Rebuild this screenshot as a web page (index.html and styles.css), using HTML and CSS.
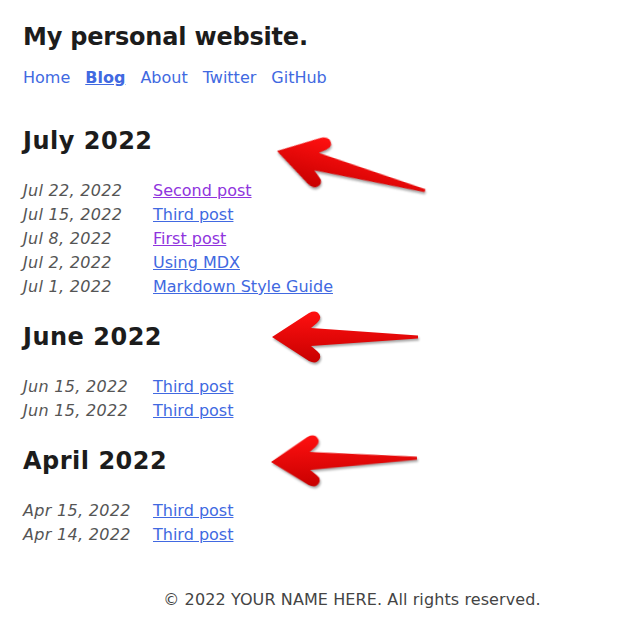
FILE: index.html
```html
<!DOCTYPE html>
<html lang="en">
<head>
<meta charset="utf-8">
<title>My personal website.</title>
<link rel="stylesheet" href="styles.css">
</head>
<body>
<div class="page">
  <header class="site-header">
    <h1 class="site-title">My personal website.</h1>
    <nav class="nav">
      <a class="nav-link" href="#">Home</a>
      <a class="nav-link active" href="#">Blog</a>
      <a class="nav-link" href="#">About</a>
      <a class="nav-link" href="#">Twitter</a>
      <a class="nav-link" href="#">GitHub</a>
    </nav>
  </header>
  <main class="archive">
    <section class="month">
      <h2 class="month-title">July 2022</h2>
      <ul class="posts">
        <li class="post"><span class="date">Jul 22, 2022</span><a class="post-link visited" href="#">Second post</a></li>
        <li class="post"><span class="date">Jul 15, 2022</span><a class="post-link" href="#">Third post</a></li>
        <li class="post"><span class="date">Jul 8, 2022</span><a class="post-link visited" href="#">First post</a></li>
        <li class="post"><span class="date">Jul 2, 2022</span><a class="post-link" href="#">Using MDX</a></li>
        <li class="post"><span class="date">Jul 1, 2022</span><a class="post-link" href="#">Markdown Style Guide</a></li>
      </ul>
    </section>
    <section class="month">
      <h2 class="month-title">June 2022</h2>
      <ul class="posts">
        <li class="post"><span class="date">Jun 15, 2022</span><a class="post-link" href="#">Third post</a></li>
        <li class="post"><span class="date">Jun 15, 2022</span><a class="post-link" href="#">Third post</a></li>
      </ul>
    </section>
    <section class="month">
      <h2 class="month-title">April 2022</h2>
      <ul class="posts">
        <li class="post"><span class="date">Apr 15, 2022</span><a class="post-link" href="#">Third post</a></li>
        <li class="post"><span class="date">Apr 14, 2022</span><a class="post-link" href="#">Third post</a></li>
      </ul>
    </section>
  </main>
  <footer class="site-footer">© 2022 YOUR NAME HERE. All rights reserved.</footer>

  <svg class="annotations" width="622" height="630" viewBox="0 0 622 630" aria-hidden="true">
    <defs>
      <linearGradient id="red" x1="0" y1="0" x2="0" y2="1">
        <stop offset="0" stop-color="#ff1010"/>
        <stop offset="1" stop-color="#c80000"/>
      </linearGradient>
      <path id="arrow" d="M0,0 L37,-24 Q45,-28 48,-21 Q49,-17 45,-14 L39,-9 L146,-1.5 L146,1.5 L39,9 L45,14 Q49,17 48,21 Q45,28 37,24 Z"/>
    </defs>
    <g class="arrow" transform="translate(277,151) rotate(15) scale(1.05,1)"><use href="#arrow" fill="url(#red)"/></g>
    <g class="arrow" transform="translate(272,337)"><use href="#arrow" fill="url(#red)"/></g>
    <g class="arrow" transform="translate(271,462) rotate(-1.5)"><use href="#arrow" fill="url(#red)"/></g>
  </svg>
</div>
</body>
</html>
```

FILE: styles.css
```css
html, body {
  margin: 0;
  padding: 0;
  background: #ffffff;
}

body {
  font-family: "DejaVu Sans", Verdana, sans-serif;
  font-size: 16px;
  line-height: 24px;
  color: #222222;
}

.page {
  position: relative;
  width: 622px;
  min-height: 630px;
  padding: 23px 23px 0;
  box-sizing: border-box;
}

.site-title {
  margin: 0;
  font-size: 24px;
  line-height: 28px;
  font-weight: bold;
  letter-spacing: -0.2px;
  color: #1c1c1c;
}

.nav {
  display: flex;
  gap: 15px;
  margin-top: 15px;
}

.nav-link {
  color: #4169e1;
  text-decoration: none;
}

.nav-link.active {
  font-weight: bold;
  text-decoration: underline;
}

.archive {
  display: flex;
  flex-direction: column;
  gap: 24px;
  margin-top: 37px;
}

.month {
  display: flex;
  flex-direction: column;
  gap: 24px;
}

.month-title {
  margin: 0;
  font-size: 24px;
  line-height: 28px;
  font-weight: bold;
  letter-spacing: 0.5px;
  color: #1c1c1c;
}

.posts {
  list-style: none;
  margin: 0;
  padding: 0;
}

.post {
  display: flex;
}

.date {
  width: 130px;
  flex: none;
  font-style: italic;
  letter-spacing: 0.3px;
  color: #555555;
}

.post-link {
  color: #4169e1;
  text-decoration: underline;
}

.post-link.visited {
  color: #8f34dd;
}

.site-footer {
  margin-top: 41px;
  padding-left: 82px;
  text-align: center;
  letter-spacing: 0.1px;
  color: #444444;
}

.annotations {
  position: absolute;
  top: 0;
  left: 0;
  pointer-events: none;
}

.arrow {
  filter: drop-shadow(1px 2px 1px rgba(0, 0, 0, 0.35));
}
```
